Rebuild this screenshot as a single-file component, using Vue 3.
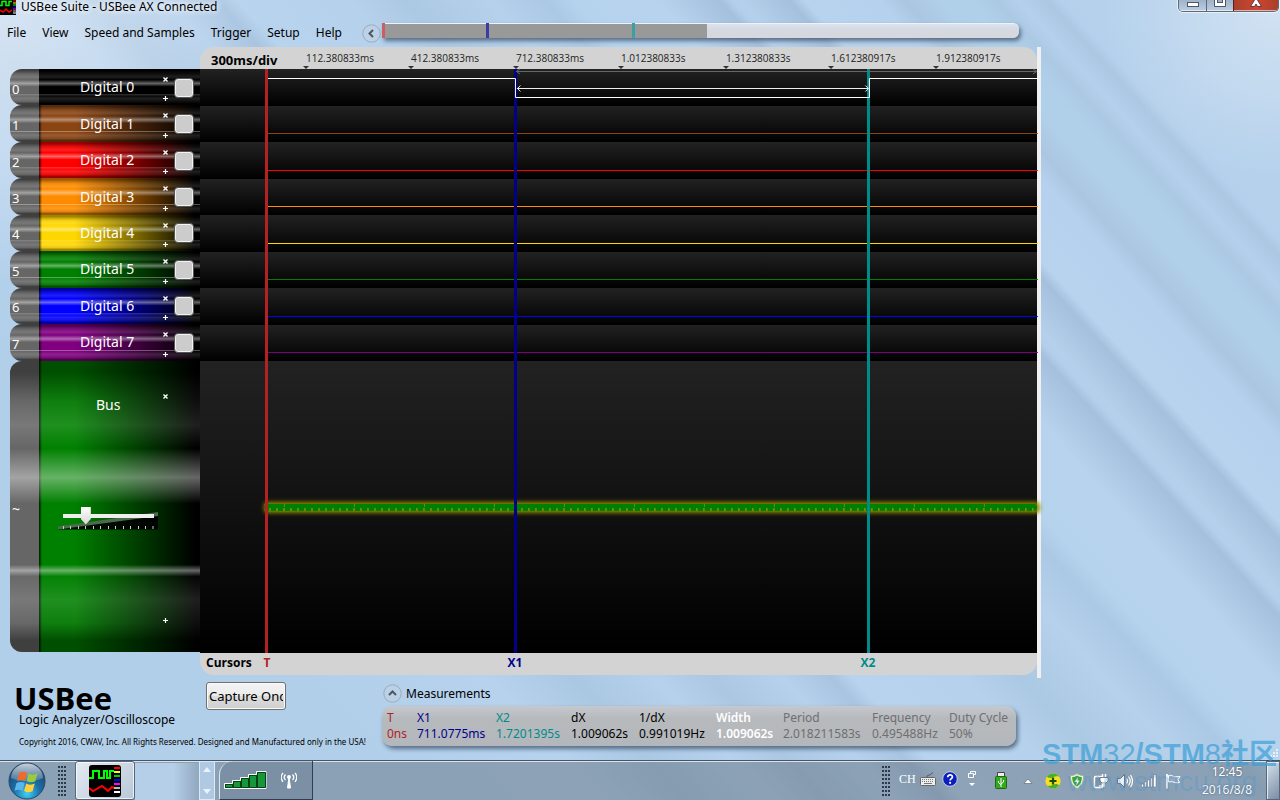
<script setup>
import { ref } from 'vue'

const menus = ['File', 'View', 'Speed and Samples', 'Trigger', 'Setup', 'Help']

const channels = ref([
  { id: 0, color: '#000000', line: '#ffffff' },
  { id: 1, color: '#8b4513', line: '#8b4513' },
  { id: 2, color: '#ff0000', line: '#ff0000' },
  { id: 3, color: '#ff8c00', line: '#ff8c00' },
  { id: 4, color: '#ffd700', line: '#ffd700' },
  { id: 5, color: '#008000', line: '#008000' },
  { id: 6, color: '#0000ff', line: '#0000ff' },
  { id: 7, color: '#800080', line: '#800080' },
].map((c) => ({ ...c, name: `Digital ${c.id}`, checked: false })))

const level = ref(22)

const ticks = [
  '112.380833ms', '412.380833ms', '712.380833ms', '1.012380833s',
  '1.312380833s', '1.612380917s', '1.912380917s',
]
const PLOT = 837
const pct = (x) => `${(x / PLOT) * 100}%`

const cursors = [
  { name: 'T', x: 67, line: 66.5, color: '#b22222' },
  { name: 'X1', x: 315, line: 315.5, color: '#00008b' },
  { name: 'X2', x: 668, line: 668.5, color: '#008b8b' },
]
const marks = [
  { at: 0, color: '#c95f63' },
  { at: 104, color: '#3b3ba6' },
  { at: 250, color: '#3ba0a4' },
]

const flatTraces = channels.value.slice(1).map((c) => ({
  id: c.id, color: c.line, y: Math.floor(c.id * 36.5) + 28.5,
}))

const measures = [
  { label: 'T', value: '0ns', color: '#b22222', w: 30 },
  { label: 'X1', value: '711.0775ms', color: '#00008b', w: 79 },
  { label: 'X2', value: '1.7201395s', color: '#008b8b', w: 75 },
  { label: 'dX', value: '1.009062s', color: '#000000', w: 68 },
  { label: '1/dX', value: '0.991019Hz', color: '#000000', w: 77 },
  { label: 'Width', value: '1.009062s', color: '#ffffff', w: 67, bold: true },
  { label: 'Period', value: '2.018211583s', color: '#6f6f6f', w: 89 },
  { label: 'Frequency', value: '0.495488Hz', color: '#6f6f6f', w: 77 },
  { label: 'Duty Cycle', value: '50%', color: '#6f6f6f', w: 67 },
]
</script>

<template>
  <div class="desktop">
    <svg class="wallpaper" viewBox="0 0 1280 800" preserveAspectRatio="xMidYMid slice" aria-hidden="true">
      <defs>
        <linearGradient id="streaks" gradientUnits="userSpaceOnUse" x1="1041" y1="-40" x2="274" y2="657">
          <stop offset="0" stop-color="#b5d1ec" />
          <stop offset=".012" stop-color="#b5d0ec" />
          <stop offset=".022" stop-color="#abc7e2" />
          <stop offset=".042" stop-color="#b5d0ec" />
          <stop offset=".058" stop-color="#acc9e4" />
          <stop offset=".078" stop-color="#b0d0ea" />
          <stop offset=".1" stop-color="#b0cfe9" />
          <stop offset=".124" stop-color="#abc6e1" />
          <stop offset=".142" stop-color="#b6d1ed" />
          <stop offset=".195" stop-color="#b8d3ee" />
          <stop offset=".206" stop-color="#a5c0dc" />
          <stop offset=".24" stop-color="#b4d0eb" />
          <stop offset=".247" stop-color="#b4cfeb" />
          <stop offset=".256" stop-color="#a5c0dc" />
          <stop offset=".3" stop-color="#b7d3ee" />
          <stop offset=".36" stop-color="#b6d3ee" />
          <stop offset=".38" stop-color="#abc8e4" />
          <stop offset=".42" stop-color="#b5d1ec" />
          <stop offset=".48" stop-color="#acc9e4" />
          <stop offset=".52" stop-color="#b5d1ec" />
          <stop offset=".6" stop-color="#b8d3ee" />
          <stop offset=".615" stop-color="#a8c4e0" />
          <stop offset=".65" stop-color="#b5d1ec" />
          <stop offset=".7" stop-color="#abc7e2" />
          <stop offset=".74" stop-color="#b5d1ec" />
          <stop offset=".8" stop-color="#abc8e3" />
          <stop offset=".86" stop-color="#b6d2ed" />
          <stop offset="1" stop-color="#b2cfea" />
        </linearGradient>
        <radialGradient id="glowRight" gradientUnits="userSpaceOnUse" cx="1280" cy="0" r="180">
          <stop offset="0" stop-color="#dce9f5" stop-opacity=".75" />
          <stop offset="1" stop-color="#dce9f5" stop-opacity="0" />
        </radialGradient>
        <radialGradient id="glowLeft" gradientUnits="userSpaceOnUse" cx="0" cy="20" r="260">
          <stop offset="0" stop-color="#dfeaf6" stop-opacity=".8" />
          <stop offset="1" stop-color="#dfeaf6" stop-opacity="0" />
        </radialGradient>
      </defs>
      <rect width="1280" height="800" fill="url(#streaks)" />
      <rect width="1280" height="800" fill="url(#glowRight)" />
      <rect width="1280" height="800" fill="url(#glowLeft)" />
    </svg>

    <header class="titlebar">
      <svg class="app-icon" width="16" height="15" viewBox="0 1 16 15" aria-hidden="true">
        <rect width="16" height="16" fill="#000" />
        <path d="M0 6.5h2v-4h4v4h3v-4h3" fill="none" stroke="#0f0" stroke-width="1.5" />
        <path d="M0 11l3 2 3-3 3 3 3-2" fill="none" stroke="#f00" stroke-width="1.5" />
        <path d="M13 2h3" stroke="#f00" /><path d="M13 4h3" stroke="#ff0" />
        <path d="M13 6h3" stroke="#0f0" /><path d="M13 8h3" stroke="#00f" />
        <path d="M13 10h3" stroke="#f0f" /><path d="M13 12h3" stroke="#bbb" />
        <path d="M13 14h3" stroke="#fff" />
      </svg>
      <h1 class="title">USBee Suite - USBee AX Connected</h1>
      <div class="win-buttons">
        <button class="win min" aria-label="Minimize">
          <svg width="12" height="8" viewBox="0 0 12 8"><rect x=".5" y="2.5" width="11" height="4" fill="#fff" stroke="#4d5566" /></svg>
        </button>
        <button class="win max" aria-label="Restore">
          <svg width="12" height="8" viewBox="0 0 12 8"><path d="M.5-3v9.500h11V-3z" fill="#fff" stroke="#4d5566" /><rect x="3.5" y="-2.5" width="5" height="5" fill="#9fb2c9" stroke="#4d5566" /></svg>
        </button>
        <button class="win close" aria-label="Close">
          <svg width="12" height="8" viewBox="0 0 12 8"><path d="M1.500-5l3 5-4 6.500h4L6 4l1.500 2.500h4L7.500 0l3-5z" fill="#fff" stroke="#5a3a40" /></svg>
        </button>
      </div>
    </header>

    <div class="toolbar">
      <nav class="menu">
        <button v-for="m in menus" :key="m" class="menu-item">{{ m }}</button>
      </nav>
      <button class="round" aria-label="Scroll left">
        <svg width="19" height="19" viewBox="0 0 19 19"><circle cx="9.5" cy="9.5" r="8.7" fill="#bdd3e8" fill-opacity=".5" stroke="#a3a9b0" /><path d="M11 6L7.500 9.500 11 13" fill="none" stroke="#555" stroke-width="2" /></svg>
      </button>
      <div class="overview">
        <i class="filled"></i>
        <i v-for="m in marks" :key="m.at" class="mark" :style="{ left: `${m.at / 6.37}%`, background: m.color }"></i>
      </div>
    </div>

    <main class="work">
      <section class="channels">
        <div class="digital-list">
          <div v-for="c in channels" :key="c.id" class="channel">
            <span class="num">{{ c.id }}</span>
            <div class="chan-body" :style="{ '--c': c.color }">
              <span class="chan-name">{{ c.name }}</span>
              <span class="chan-buttons">
                <button class="tiny" :aria-label="`Remove ${c.name}`"><svg width="5" height="5" viewBox="0 0 5 5"><path d="M.5.500l4 4M4.500.500l-4 4" stroke="#fff" stroke-width="1.4" /></svg></button>
                <button class="tiny" :aria-label="`Expand ${c.name}`"><svg width="5" height="5" viewBox="0 0 5 5"><path d="M0 2.500h5M2.500 0v5" stroke="#fff" stroke-width="1.2" /></svg></button>
              </span>
              <input v-model="c.checked" class="tick" type="checkbox" :aria-label="c.name" />
            </div>
            <i class="gloss"></i>
          </div>
        </div>
        <div class="channel bus">
          <span class="num">~</span>
          <div class="chan-body" :style="{ '--c': '#008000' }">
            <div class="bus-main">
              <span class="bus-name">Bus</span>
              <div class="level">
                <svg class="wedge" width="100" height="18" viewBox="0 0 100 18" aria-hidden="true">
                  <path d="M0 15.500L100 0v17.500H0z" fill="#000" opacity=".9" />
                  <path d="M0 14.500L100 0v4L0 17.500z" fill="#4c6b4c" />
                  <path d="M5.500 14v3M12.500 14v3M20.500 14v3M27.500 14v3M35.500 14v3M42.500 14v3M50.500 14v3M57.500 14v3M65.500 14v3M72.500 14v3M80.500 14v3M87.500 14v3M95 14v3" stroke="#ccc" />
                </svg>
                <input v-model="level" class="slider" type="range" min="0" max="100" aria-label="Bus level" />
              </div>
            </div>
            <span class="chan-buttons bus-buttons">
              <button class="tiny" aria-label="Remove Bus"><svg width="5" height="5" viewBox="0 0 5 5"><path d="M.5.500l4 4M4.500.500l-4 4" stroke="#fff" stroke-width="1.4" /></svg></button>
              <button class="tiny" aria-label="Expand Bus"><svg width="5" height="5" viewBox="0 0 5 5"><path d="M0 2.500h5M2.500 0v5" stroke="#fff" stroke-width="1.2" /></svg></button>
            </span>
          </div>
          <i class="gloss"></i>
        </div>
      </section>

      <section class="scope">
        <div class="ruler">
          <strong class="div-label">300ms/div</strong>
          <span v-for="(t, i) in ticks" :key="t" class="tick-label" :style="{ left: pct(106 + i * 105) }">{{ t }}</span>
        </div>
        <div class="plot">
          <div class="lanes">
            <i v-for="c in channels" :key="c.id" class="lane"></i>
          </div>
          <i class="lane"></i>
          <svg class="signals" viewBox="0 0 837 584" preserveAspectRatio="none" aria-hidden="true">
            <defs>
              <filter id="halo" x="-5%" y="-100%" width="110%" height="300%"><feGaussianBlur stdDeviation="2" /></filter>
            </defs>
            <g shape-rendering="crispEdges" fill="none">
              <path v-for="t in flatTraces" :key="t.id" :d="`M67 ${t.y}H838`" :stroke="t.color" />
            </g>
            <rect x="64" y="433" width="776" height="11" rx="4" fill="#8a8a00" filter="url(#halo)" />
            <rect x="64" y="434" width="773" height="9" rx="3" fill="#7a6a00" />
            <rect x="64" y="435" width="773" height="7" rx="3" fill="#008000" />
            <path d="M69.500 440.500H837" stroke="#a8a818" stroke-width="3" stroke-dasharray="1 6" />
            <path d="M84 436.500H837" stroke="#6f8a10" stroke-width="3" stroke-dasharray="1 69" />
            <g stroke-width="3" shape-rendering="crispEdges">
              <path v-for="c in cursors" :key="c.name" :d="`M${c.line} 0V584`" :stroke="c.color" />
            </g>
            <path d="M68 9.500H315.500V28.500H669.500V9.500H838" fill="none" stroke="#fff" shape-rendering="crispEdges" />
            <path d="M316 2.500H837M320 0l-3.500 2.500 3.500 2.500M833 0l4 2.500-4 2.500" fill="none" stroke="#666" />
            <path d="M317 19.500H668M320.500 16.500l-3 3 3 3M665.500 16.500l3 3-3 3" fill="none" stroke="#eee" />
          </svg>
        </div>
        <div class="cursor-bar">
          <strong class="cursor-title">Cursors</strong>
          <strong v-for="c in cursors" :key="c.name" class="cursor-name" :style="{ left: pct(c.x), color: c.color }">{{ c.name }}</strong>
        </div>
      </section>
      <div class="splitter"></div>
    </main>

    <section class="footer">
      <div class="brand">
        <strong class="logo">USBee</strong>
        <span class="tagline">Logic Analyzer/Oscilloscope</span>
        <small class="copyright">Copyright 2016, CWAV, Inc. All Rights Reserved. Designed and Manufactured only in the USA!</small>
      </div>
      <button class="capture"><span>Capture Once</span></button>
      <div class="measure-box">
        <button class="measure-toggle">
          <svg width="19" height="19" viewBox="0 0 19 19"><circle cx="9.5" cy="9.5" r="8.7" fill="#bdd3e8" fill-opacity=".5" stroke="#a3a9b0" /><path d="M6 11l3.500-3.500L13 11" fill="none" stroke="#555" stroke-width="2" /></svg>
          Measurements
        </button>
        <table class="measures">
          <thead>
            <tr><th v-for="m in measures" :key="m.label" :class="{ bold: m.bold }" :style="{ color: m.color, width: `${m.w}px` }">{{ m.label }}</th></tr>
          </thead>
          <tbody>
            <tr><td v-for="m in measures" :key="m.label" :class="{ bold: m.bold }" :style="{ color: m.color }">{{ m.value }}</td></tr>
          </tbody>
        </table>
      </div>
      <svg class="resize" width="10" height="10" viewBox="0 0 10 10" aria-hidden="true"><path d="M7 1h2M4 4h2M7 4h2M1 7h2M4 7h2M7 7h2" stroke="#e8f1fa" stroke-width="2" /></svg>
    </section>

    <footer class="taskbar">
      <button class="start" aria-label="Start">
        <svg width="38" height="38" viewBox="0 0 38 38">
          <defs>
            <radialGradient id="orb" cx=".5" cy=".85" r=".8"><stop offset="0" stop-color="#3fd0f5" /><stop offset=".45" stop-color="#1c6fa8" /><stop offset="1" stop-color="#1d3f66" /></radialGradient>
            <linearGradient id="shine" x1="0" y1="0" x2="0" y2="1"><stop offset="0" stop-color="#fff" stop-opacity=".75" /><stop offset="1" stop-color="#fff" stop-opacity=".15" /></linearGradient>
          </defs>
          <circle cx="19" cy="19" r="18" fill="url(#orb)" stroke="#27496a" />
          <path d="M3 16a16 14.500 0 0132 0c-8 4-22 5-32 0z" fill="url(#shine)" />
          <path d="M11 11c3-2 6-1.500 8 0l-2 8c-3-1.500-5.500-1.500-8 0z" fill="#ef6a2c" />
          <path d="M20.500 11.500c3 1.700 6 1.500 9-.2l-2.200 8c-3 1.500-6 1.400-8.600-.2z" fill="#9bcb3c" />
          <path d="M8.500 21c3-1.600 5.500-1.400 8.200.1l-2.200 7.700c-2.500-1.400-5-1.500-8 0z" fill="#5cb6ec" />
          <path d="M18.200 21.500c3 1.600 5.800 1.500 8.600.1l-2.200 7.600c-3 1.500-5.600 1.400-8.500-.2z" fill="#fcd13a" />
        </svg>
      </button>
      <i class="grip"></i>
      <button class="task" aria-label="USBee Suite">
        <svg width="32" height="32" viewBox="0 0 32 32">
          <rect width="32" height="32" rx="3" fill="#000" />
          <path d="M0 13h4V6h6v7h5V6h3v7h3V6h4" fill="none" stroke="#0f0" stroke-width="2" />
          <path d="M0 23l4 3 9-5 6 5 4-4 2 1" fill="none" stroke="#f00" stroke-width="2" />
          <g stroke-width="2"><path d="M25 3h6" stroke="#f00" /><path d="M25 7h6" stroke="#ff0" /><path d="M25 11h6" stroke="#0c0" /><path d="M25 15h6" stroke="#00f" /><path d="M25 19h6" stroke="#f0f" /><path d="M25 23h6" stroke="#bbb" /><path d="M25 27h6" stroke="#fff" /></g>
        </svg>
      </button>
      <div class="task-space"></div>
      <div class="task-scroll">
        <button aria-label="Scroll up"><svg width="8" height="5" viewBox="0 0 8 5"><path d="M0 5l4-5 4 5z" fill="#eaf3fc" /></svg></button>
        <button aria-label="Scroll down"><svg width="8" height="5" viewBox="0 0 8 5"><path d="M0 0l4 5 4-5z" fill="#eaf3fc" /></svg></button>
      </div>
      <div class="net-band">
        <svg width="43" height="18" viewBox="0 0 43 18" aria-hidden="true">
          <path d="M.5 17.500v-5h8v-3h8v-3h8v-3h8v-3h9.500v17z" fill="#118a2f" stroke="#fff" />
          <path d="M1.500 16.500v-3h7v3zM9.500 16.500v-6h7v6zM17.500 16.500v-9h7v9zM25.500 16.500v-12h7v12zM33.500 16.500v-15h8v15z" fill="#15973a" stroke="#053f14" />
        </svg>
        <svg width="16" height="17" viewBox="0 0 16 17" aria-hidden="true">
          <path d="M8 5l1.500 11h-3z" fill="#fff" stroke="#fff" /><circle cx="8" cy="5" r="2" fill="#fff" />
          <path d="M4.500 2.500a4 4 0 000 5.500M2 .8a7 7 0 000 9M11.500 2.500a4 4 0 010 5.500M14 .8a7 7 0 010 9" fill="none" stroke="#fff" stroke-width="1.3" />
        </svg>
      </div>

      <div class="tray">
        <i class="grip"></i>
        <span class="lang">CH</span>
        <svg class="kb" width="16" height="14" viewBox="0 0 16 14"><path d="M7 5c0-3 3-1 4-3l2-1.500" fill="none" stroke="#555" /><rect x=".5" y="5.5" width="15" height="8" rx="1" fill="#eee" stroke="#666" /><path d="M2 7.500h12M2 9.500h12" stroke="#777" stroke-dasharray="1 1" /><path d="M4 11.500h8" stroke="#777" /></svg>
        <svg class="help" width="16" height="16" viewBox="0 0 16 16"><circle cx="8" cy="8" r="7.3" fill="#0a1fc0" stroke="#c9cfdc" /><path d="M5.700 6.200C5.700 3 10.500 3.200 10.400 6c0 1.600-2.300 1.700-2.300 3.500" fill="none" stroke="#fff" stroke-width="1.7" /><circle cx="8.1" cy="11.8" r="1.1" fill="#fff" /></svg>
        <svg class="restore" width="10" height="18" viewBox="0 0 10 18"><path d="M3.500 3.500v-2h5v3h-2M1.500 3.500h5v4h-5z" fill="none" stroke="#fff" /><path d="M2 13l3 3 3-3z" fill="#fff" /></svg>
        <svg class="usb" width="12" height="17" viewBox="0 0 12 17"><path d="M2.500 4.500v-4h7v4z" fill="#eee" stroke="#444" /><rect x=".5" y="4.5" width="11" height="12" rx="1" fill="#35a81e" stroke="#1d6b10" /><path d="M6 15V6M6 13L3.500 10.500V9M6 12l2.500-2V8" fill="none" stroke="#fff" /></svg>
        <svg class="more" width="10" height="6" viewBox="0 0 10 6"><path d="M1 5.500l4-4.500 4 4.500z" fill="#fff" stroke="#55606e" stroke-width=".6" /></svg>
        <div class="icons">
          <svg width="16" height="16" viewBox="0 0 16 16"><circle cx="8" cy="8" r="7.6" fill="#f7e11c" /><path d="M2 3.500a7.600 7.600 0 0112 0c-4-1-5 .5-6.500 1S3.500 5.500 2 3.500zM14 12.500a7.600 7.600 0 01-12 0c4 1 5-.5 6.500-1s4-1 5.500 1z" fill="#46b02c" /><path d="M8 4.500v7M4.500 8h7" stroke="#1b4f12" stroke-width="2.2" /></svg>
          <svg width="16" height="16" viewBox="0 0 16 16"><path d="M8 .5c2 1.500 4.500 2 6.500 2 .3 6-1.500 10.500-6.500 13C3 13 1.200 8.500 1.500 2.500c2 0 4.500-.5 6.500-2z" fill="#e9f4e4" stroke="#9ab493" /><path d="M8 2.500c1.500 1 3.300 1.500 4.800 1.500 0 4.500-1.300 7.500-4.800 9.500C4.500 11.500 3.200 8.500 3.200 4 4.700 4 6.500 3.500 8 2.500z" fill="#3fa32c" /><path d="M9 4L5.500 9H8l-1 3.500L10.800 7.500H8.500z" fill="#fff" /></svg>
          <svg width="16" height="16" viewBox="0 0 16 16"><rect x="1.5" y="3.5" width="8" height="11" rx="1" fill="#8593a5" stroke="#fff" stroke-width="1.5" /><path d="M7 4.500h8v3.500l-2 2h-4l-2-2z" fill="#fff" stroke="#4b5666" stroke-width=".7" /><path d="M9.500 1v3M12.500 1v3M11 10v3H6" fill="none" stroke="#fff" stroke-width="1.5" /></svg>
          <svg width="16" height="16" viewBox="0 0 16 16"><path d="M.5 5.500h3l4-4v13l-4-4h-3z" fill="#eef2f6" stroke="#4b5666" stroke-width=".7" /><path d="M9.500 5.500q2 2.500 0 5M11.500 3.500q3.500 4.500 0 9M13.500 2q4 6 0 12" fill="none" stroke="#fff" stroke-width="1.2" /></svg>
          <svg width="16" height="16" viewBox="0 0 16 16"><path d="M.5 11h2v3h-2zM3.500 9h2v5h-2zM6.500 7h2v7h-2zM9.500 5h2v9h-2zM12.500 2h2.500v12h-2.500z" fill="#fff" stroke="#4b5666" stroke-width=".4" /></svg>
          <svg width="16" height="16" viewBox="0 0 16 16"><path d="M2 1v14.500" stroke="#fff" stroke-width="1.8" /><path d="M3.500 2.500c3-1 4 1 6 1.200 2 .2 3-.2 5.500-.2l-2 3 1.500 3c-3 .5-4 .3-5.500-.3-2-.8-3-.5-5.500-.2z" fill="#97a9bd" stroke="#fff" /></svg>
        </div>
        <div class="clock"><span>12:45</span><span>2016/8/8</span></div>
        <button class="show-desktop" aria-label="Show desktop"></button>
      </div>
      <div class="watermark">
        <div class="wm-top"><b>STM</b>32<b>/STM</b>8<b>社区</b></div>
        <div class="wm-url">www.stmcu.org</div>
      </div>
    </footer>
  </div>
</template>

<style>
body { margin: 0; }
</style>

<style scoped>
.desktop {
  position: relative;
  display: flex;
  flex-direction: column;
  min-height: 100vh;
  overflow: hidden;
  isolation: isolate;
  font-family: "Noto Sans", "Open Sans", "Noto Sans CJK SC", sans-serif;
  font-size: 12px;
  line-height: 16px;
  color: #000;
}
.wallpaper { position: absolute; inset: 0; width: 100%; height: 100%; z-index: -1; }
button { font: inherit; color: inherit; border: 0; padding: 0; margin: 0; background: none; }
svg { display: block; }

.titlebar { display: flex; height: 14px; align-items: flex-start; }
.app-icon { flex: none; }
.title { flex: 1; margin: 0; padding-left: 5px; font-size: 12px; line-height: 14px; font-weight: 400; text-shadow: 0 0 6px #fff, 0 0 6px #fff; white-space: nowrap; }
.win-buttons { display: flex; margin-right: 1px; height: 11px; border: 1px solid #5d6878; border-top: 0; border-radius: 0 0 5px 5px; box-shadow: 0 0 0 1px rgba(255, 255, 255, .6); overflow: hidden; }
.win { width: 27px; display: flex; justify-content: center; align-items: flex-start; overflow: hidden; background: linear-gradient(#9fb3ca, #bccde0); box-shadow: inset 0 -1px rgba(255, 255, 255, .6); }
.max { border-left: 1px solid #5d6878; }
.close { width: 45px; border-left: 1px solid #5c1c18; background: linear-gradient(90deg, #a8402c, #cf4530 50%, #a8402c); }

.toolbar { display: flex; height: 33px; align-items: flex-start; }
.menu { display: flex; gap: 16px; padding-left: 7px; width: 362px; box-sizing: border-box; line-height: 37px; white-space: nowrap; }
.round { margin-top: 10px; width: 19px; margin-right: 1px; }
.overview { position: relative; flex: 1; max-width: 637px; margin-top: 9px; height: 15px; box-sizing: border-box; border-top: 1px solid #eef3f9; border-radius: 0 6px 6px 0; background: linear-gradient(#d9e2ee, #d5d8de 50%); box-shadow: 2px 3px 4px rgba(50, 70, 95, .7); }
.filled { position: absolute; left: 0; top: 0; bottom: 0; width: 51%; background: #999; }
.mark { position: absolute; top: -1px; bottom: 0; width: 3px; }

.work { flex: 1; display: grid; grid-template-columns: 190px 3.5fr 4px 1fr; padding-left: 10px; }
.channels { display: flex; flex-direction: column; padding: 22px 0 26px; }
.digital-list { flex: 1; display: flex; flex-direction: column; }
.channel { position: relative; flex: 1; min-height: 36px; display: flex; border-radius: 12px 0 0 12px; overflow: hidden; background: #666; color: #fff; }
.num { width: 29px; box-sizing: border-box; padding: 3px 0 0 2px; align-self: center; font-size: 13px; z-index: 1; }
.chan-body { flex: 1; display: flex; align-items: center; background: linear-gradient(90deg, rgba(0, 0, 0, .8), transparent 3px), linear-gradient(90deg, var(--c) 22%, #000 97%); }
.chan-name { flex: 1; padding-left: 41px; font-size: 14px; line-height: 20px; white-space: nowrap; z-index: 1; }
.gloss {
  position: absolute; inset: 0;
  background: linear-gradient(rgba(0, 0, 0, .38) 0 4%, rgba(120, 120, 120, .12) 14%, rgba(255, 255, 255, .12) 22%, rgba(255, 255, 255, 0) 30%, rgba(255, 255, 255, .4) 40%, rgba(255, 255, 255, 0) 49%, rgba(255, 255, 255, 0) 70%, rgba(255, 255, 255, .4) 72%, rgba(255, 255, 255, .02) 74%, rgba(255, 255, 255, .12) 82%, rgba(120, 120, 120, .12) 90%, rgba(0, 0, 0, .38) 96% 100%);
  pointer-events: none;
}
.chan-buttons { align-self: stretch; display: flex; flex-direction: column; justify-content: space-between; width: 5px; padding: 8px 0 4px; margin-right: 6px; z-index: 1; }
.tiny { height: 5px; line-height: 0; }
.tick { appearance: none; width: 20px; height: 20px; margin: 1px 6px 0 0; box-sizing: border-box; border: 1px solid #555; border-radius: 4px; background: #ccc; box-shadow: inset 0 0 0 1px #f2f2f2; z-index: 1; }
.bus .num { padding-top: 6px; font-size: 14px; }
.bus .chan-body { align-items: stretch; }
.bus-main { flex: 1; display: flex; flex-direction: column; padding: 34px 0 0 19px; z-index: 1; }
.bus-name { padding-left: 38px; font-size: 14px; line-height: 20px; }
.level { position: relative; margin-top: 92px; width: 100px; height: 24px; }
.wedge { position: absolute; left: 0; top: 5px; }
.slider { position: absolute; left: 5px; top: 0; width: 91px; height: 18px; margin: 0; appearance: none; background: linear-gradient(transparent 7px, #eee 7px 11px, transparent 11px); }
.slider::-webkit-slider-thumb { appearance: none; width: 10px; height: 18px; background: linear-gradient(#fff, #d5d5d5); clip-path: polygon(0 0, 100% 0, 100% 70%, 50% 100%, 0 70%); }
.bus-buttons { padding: 33px 0 29px; margin-right: 32px; }

.scope { display: flex; flex-direction: column; margin-bottom: 3px; }
.ruler, .cursor-bar { position: relative; height: 22px; background: #d3d3d3; white-space: nowrap; }
.ruler { border-radius: 14px 14px 0 0; }
.div-label { padding-left: 11px; font-size: 13px; line-height: 26px; }
.tick-label { position: absolute; top: 3px; font-family: "Open Sans", sans-serif; font-size: 10px; line-height: 16px; color: #222; }
.tick-label::after { content: ""; position: absolute; left: -3px; top: 16px; border: 3px solid transparent; border-top-color: #333; border-bottom: 0; }
.plot { position: relative; flex: 1; display: flex; flex-direction: column; }
.lanes { flex: 1; display: flex; flex-direction: column; }
.lane { flex: 1; background: linear-gradient(#222, #000); }
.signals { position: absolute; inset: 0; width: 100%; height: 100%; overflow: visible; }
.cursor-bar { border-radius: 0 0 14px 14px; font-family: "Open Sans", sans-serif; line-height: 20px; }
.cursor-title { padding-left: 6px; }
.cursor-name { position: absolute; transform: translateX(-50%); }
.splitter { background: #f0f0f0; }

.footer { position: relative; display: flex; align-items: flex-start; height: 82px; }
.brand { display: flex; flex-direction: column; width: 206px; white-space: nowrap; }
.logo { padding-left: 14px; font-family: "Open Sans", sans-serif; font-size: 31px; line-height: 40px; }
.tagline { padding-left: 19px; line-height: 16px; margin-top: -6px; }
.copyright { padding-left: 19px; font-size: 8px; line-height: 12px; margin-top: 8px; }
.capture { margin-top: 4px; width: 80px; height: 28px; box-sizing: border-box; border: 1px solid #707070; border-radius: 3px; background: linear-gradient(#f3f3f3, #ebebeb 50%, #ddd 50%, #cfcfcf); box-shadow: inset 0 0 0 1px #fbfbfb; padding: 0 2px; }
.capture span { display: block; overflow: hidden; white-space: nowrap; text-align: left; font-size: 13px; line-height: 24px; }
.measure-box { margin-left: 96px; }
.measure-toggle { display: flex; align-items: center; gap: 4px; margin: 6px 0 3px 1px; height: 19px; }
.measures { table-layout: fixed; border-collapse: collapse; background: linear-gradient(#c5c9ce, #b7babd 30%, #b3b7bb); border-radius: 10px; box-shadow: 2px 3px 4px rgba(50, 70, 95, .7); }
.measures th, .measures td { padding: 0; font-weight: 400; text-align: left; white-space: nowrap; line-height: 16px; height: 16px; }
.measures th { padding-top: 4px; }
.measures td { padding-bottom: 4px; }
.measures th:first-child, .measures td:first-child { padding-left: 5px; }
.measures .bold { font-weight: 600; }
.resize { position: absolute; right: 1px; bottom: 1px; }

.taskbar { position: relative; display: flex; height: 40px; box-sizing: border-box; border-top: 1px solid #42566e; background: rgba(67, 74, 84, .35); box-shadow: inset 0 1px rgba(255, 255, 255, .7); }
.start { width: 38px; margin: 1px 0 0 8px; }
.grip { width: 8px; margin: 5px 0 4px; background: radial-gradient(circle at 1px 1px, #2c3a4a 1px, transparent 1px) 0 0 / 3px 4px; }
.start + .grip { margin-left: 12px; }
.task { width: 60px; margin-left: 9px; display: flex; justify-content: center; align-items: center; border: 1px solid #56687d; border-radius: 3px; background: linear-gradient(135deg, #e3eaf1, #b9c8d8); box-shadow: inset 0 0 0 1px rgba(255, 255, 255, .7); }
.task-space { width: 64px; margin-top: 2px; background: linear-gradient(90deg, #b5cfe8 60%, rgba(150, 175, 200, .5)); }
.task-scroll { width: 14px; display: flex; flex-direction: column; justify-content: space-between; align-items: center; border: 1px solid #dce9f5; background: rgba(184, 211, 238, .8); padding: 5px 0; }
.net-band { width: 94px; margin-left: 4px; display: flex; align-items: center; gap: 14px; padding-left: 4px; box-sizing: border-box; border-right: 1px solid #2f3f50; border-left: 1px solid #dce6f0; border-radius: 14px 0 0 0; background: rgba(60, 80, 105, .2); border-bottom: 1px solid #2f3f50; }
.tray { margin-left: auto; display: flex; align-items: center; color: #fff; }
.lang { margin-left: 9px; width: 16px; font-family: "Liberation Serif", serif; font-size: 12px; margin-bottom: 4px; }
.kb { margin-left: 5px; margin-bottom: 4px; }
.help { margin-left: 6px; margin-bottom: 4px; }
.restore { margin-left: 9px; margin-bottom: 4px; }
.usb { margin-left: 18px; }
.more { margin-left: 16px; }
.icons { display: flex; gap: 8px; margin: 0 0 0 12px; }
.tray .grip { align-self: stretch; }
.clock { width: 60px; margin: 0 9px 0 16px; display: flex; flex-direction: column; align-items: center; line-height: 18px; text-shadow: 0 0 2px #456; }
.show-desktop { width: 14px; align-self: stretch; border: 1px solid #56687d; background: linear-gradient(135deg, rgba(230, 240, 250, .8), rgba(110, 130, 155, .6)); box-shadow: inset 1px 1px rgba(255, 255, 255, .7); }
.watermark { position: absolute; right: 3px; top: -21px; color: rgba(62, 160, 214, .72); font-family: "Liberation Sans", "Noto Sans CJK SC", sans-serif; font-size: 29px; line-height: 28px; white-space: nowrap; pointer-events: none; }
.wm-top b:last-child { font-size: 28px; }
.wm-url { margin: -2px 20px 0 0; text-align: right; font-size: 28px; line-height: 30px; color: rgba(62, 150, 214, .3); }
</style>
